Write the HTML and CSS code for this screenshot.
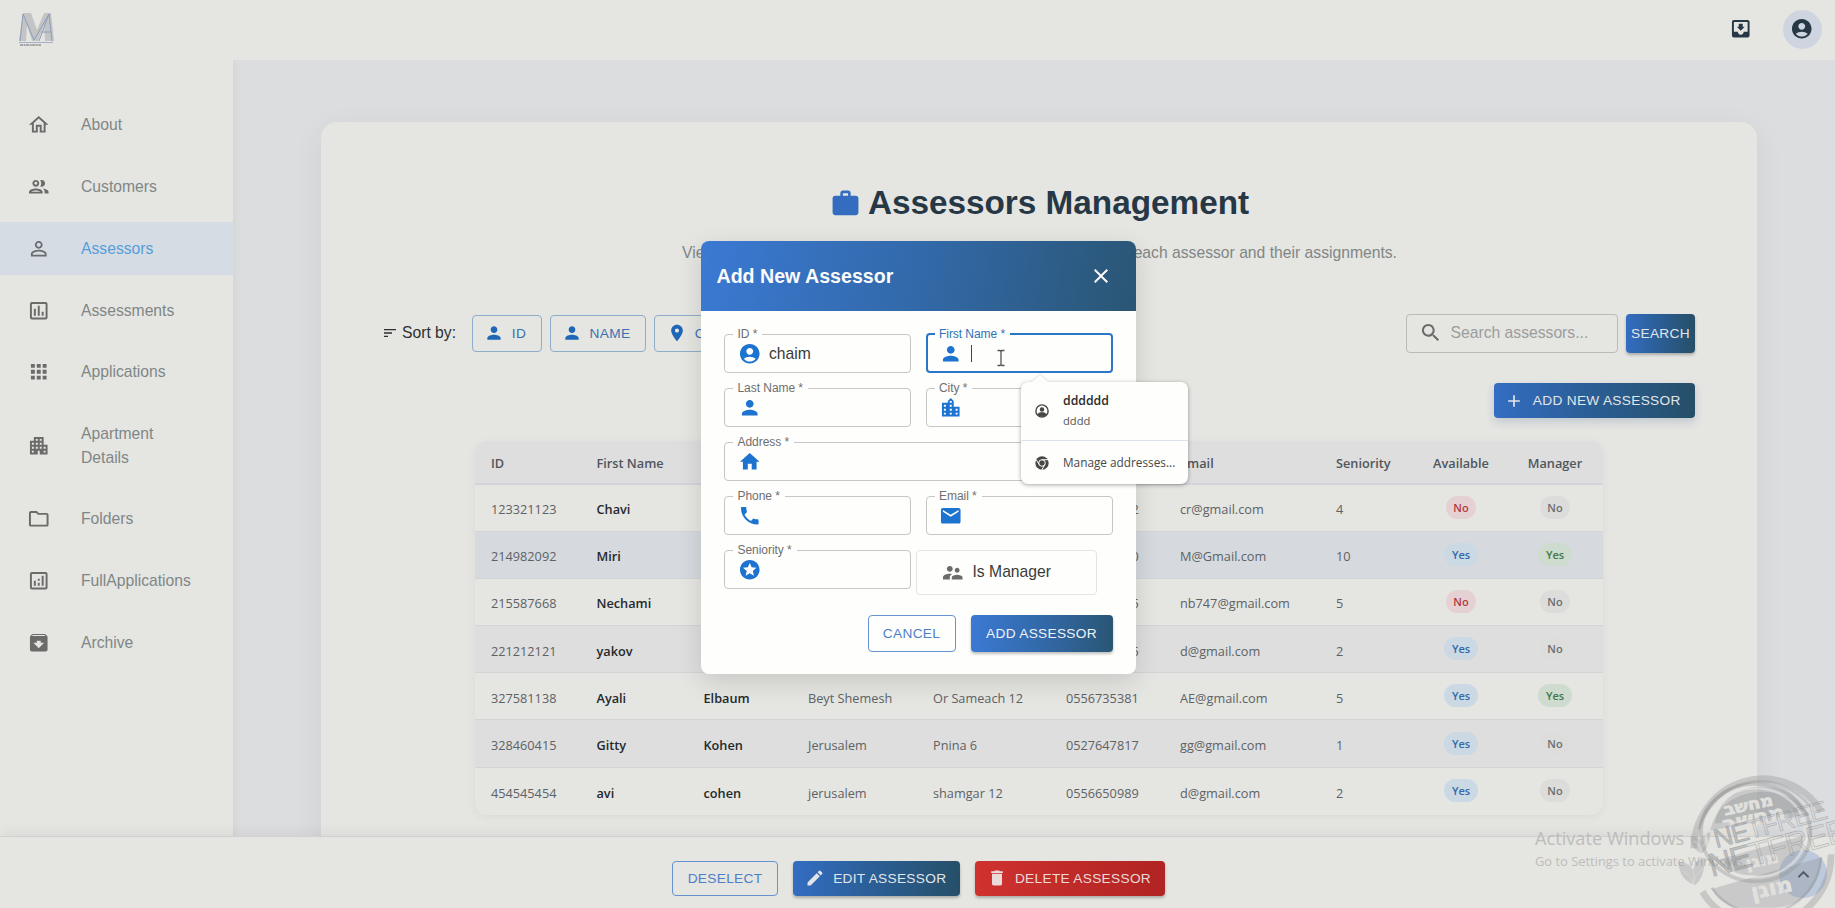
FILE: index.html
```html
<!DOCTYPE html>
<html lang="en">
<head>
<meta charset="utf-8">
<title>Assessors Management</title>
<link rel="stylesheet" href="styles.css">
</head>
<body>
<svg class="sprite" aria-hidden="true">
  <symbol id="i-home-o" viewBox="0 0 24 24"><path d="m12 5.69 5 4.5V18h-2v-6H9v6H7v-7.81zM12 3 2 12h3v8h6v-6h2v6h6v-8h3z"/></symbol>
  <symbol id="i-people" viewBox="0 0 24 24"><path d="M9 13.75c-2.34 0-7 1.17-7 3.5V19h14v-1.75c0-2.33-4.66-3.5-7-3.5M4.34 17c.84-.58 2.87-1.25 4.66-1.25s3.82.67 4.66 1.25zM9 12c1.93 0 3.5-1.57 3.5-3.5S10.93 5 9 5 5.5 6.57 5.5 8.5 7.07 12 9 12m0-5c.83 0 1.5.67 1.5 1.5S9.83 10 9 10s-1.5-.67-1.5-1.5S8.17 7 9 7m7.04 6.81c1.16.84 1.96 1.96 1.96 3.44V19h4v-1.75c0-2.02-3.5-3.17-5.96-3.44M15 12c1.93 0 3.5-1.57 3.5-3.5S16.93 5 15 5c-.54 0-1.04.13-1.5.35.63.89 1 1.98 1 3.15s-.37 2.26-1 3.15c.46.22.96.35 1.5.35"/></symbol>
  <symbol id="i-person-o" viewBox="0 0 24 24"><path d="M12 5.9c1.16 0 2.1.94 2.1 2.1s-.94 2.1-2.1 2.1S9.9 9.16 9.9 8s.94-2.1 2.1-2.1m0 9c2.97 0 6.1 1.46 6.1 2.1v1.1H5.9V17c0-.64 3.13-2.1 6.1-2.1M12 4C9.79 4 8 5.79 8 8s1.79 4 4 4 4-1.79 4-4-1.79-4-4-4m0 9c-2.67 0-8 1.34-8 4v3h16v-3c0-2.66-5.33-4-8-4"/></symbol>
  <symbol id="i-assess" viewBox="0 0 24 24"><path d="M19 3H5c-1.1 0-2 .9-2 2v14c0 1.1.9 2 2 2h14c1.1 0 2-.9 2-2V5c0-1.1-.9-2-2-2m0 16H5V5h14zM7 10h2v7H7zm4-3h2v10h-2zm4 6h2v4h-2z"/></symbol>
  <symbol id="i-apps" viewBox="0 0 24 24"><path d="M4 8h4V4H4zm6 12h4v-4h-4zm-6 0h4v-4H4zm0-6h4v-4H4zm6 0h4v-4h-4zm6-10v4h4V4zm-6 4h4V4h-4zm6 6h4v-4h-4zm0 6h4v-4h-4z"/></symbol>
  <symbol id="i-apartment" viewBox="0 0 24 24"><path d="M17 11V3H7v4H3v14h8v-4h2v4h8V11zM7 19H5v-2h2zm0-4H5v-2h2zm0-4H5V9h2zm4 4H9v-2h2zm0-4H9V9h2zm0-4H9V5h2zm4 8h-2v-2h2zm0-4h-2V9h2zm0-4h-2V5h2zm4 12h-2v-2h2zm0-4h-2v-2h2z"/></symbol>
  <symbol id="i-folder" viewBox="0 0 24 24"><path d="m9.17 6 2 2H20v10H4V6zM10 4H4c-1.1 0-1.99.9-1.99 2L2 18c0 1.1.9 2 2 2h16c1.1 0 2-.9 2-2V8c0-1.1-.9-2-2-2h-8z"/></symbol>
  <symbol id="i-analytics" viewBox="0 0 24 24"><path d="M19 3H5c-1.1 0-2 .9-2 2v14c0 1.1.9 2 2 2h14c1.1 0 2-.9 2-2V5c0-1.1-.9-2-2-2m0 16H5V5h14zM7 12h2v5H7zm8-5h2v10h-2zm-4 7h2v3h-2zm0-4h2v2h-2z"/></symbol>
  <symbol id="i-archive" viewBox="0 0 24 24"><path d="m20.54 5.23-1.39-1.68C18.88 3.21 18.47 3 18 3H6c-.47 0-.88.21-1.16.55L3.46 5.23C3.17 5.57 3 6.02 3 6.5V19c0 1.1.9 2 2 2h14c1.1 0 2-.9 2-2V6.5c0-.48-.17-.93-.46-1.27M12 17.5 6.5 12H10v-2h4v2h3.5zM5.12 5l.81-1h12l.94 1z"/></symbol>
  <symbol id="i-inbox" viewBox="0 0 24 24"><path d="M19 3H4.99c-1.11 0-1.98.9-1.98 2L3 19c0 1.1.88 2 1.99 2H19c1.1 0 2-.9 2-2V5c0-1.1-.9-2-2-2m0 12h-4c0 1.66-1.35 3-3 3s-3-1.34-3-3H4.99V5H19zm-3-5h-2V7h-4v3H8l4 4z"/></symbol>
  <symbol id="i-account" viewBox="0 0 24 24"><path d="M12 2C6.48 2 2 6.48 2 12s4.48 10 10 10 10-4.48 10-10S17.52 2 12 2m0 4c1.93 0 3.5 1.57 3.5 3.5S13.93 13 12 13s-3.5-1.57-3.5-3.5S10.07 6 12 6m0 14c-2.03 0-4.43-.82-6.14-2.88C7.55 15.8 9.68 15 12 15s4.45.8 6.14 2.12C16.43 19.18 14.03 20 12 20"/></symbol>
  <symbol id="i-work" viewBox="0 0 24 24"><path d="M20 6h-4V4c0-1.11-.89-2-2-2h-4c-1.11 0-2 .89-2 2v2H4c-1.11 0-1.99.89-1.99 2L2 19c0 1.11.89 2 2 2h16c1.11 0 2-.89 2-2V8c0-1.11-.89-2-2-2m-6 0h-4V4h4z"/></symbol>
  <symbol id="i-sort" viewBox="0 0 24 24"><path d="M3 18h6v-2H3zM3 6v2h18V6zm0 7h12v-2H3z"/></symbol>
  <symbol id="i-person" viewBox="0 0 24 24"><path d="M12 12c2.21 0 4-1.79 4-4s-1.79-4-4-4-4 1.79-4 4 1.79 4 4 4m0 2c-2.67 0-8 1.34-8 4v2h16v-2c0-2.66-5.33-4-8-4"/></symbol>
  <symbol id="i-pin" viewBox="0 0 24 24"><path d="M12 2C8.13 2 5 5.13 5 9c0 5.25 7 13 7 13s7-7.75 7-13c0-3.87-3.13-7-7-7m0 9.5c-1.38 0-2.5-1.12-2.5-2.5s1.12-2.5 2.5-2.5 2.5 1.12 2.5 2.5-1.12 2.5-2.5 2.5"/></symbol>
  <symbol id="i-search" viewBox="0 0 24 24"><path d="M15.5 14h-.79l-.28-.27C15.41 12.59 16 11.11 16 9.5 16 5.91 13.09 3 9.5 3S3 5.91 3 9.5 5.91 16 9.5 16c1.61 0 3.09-.59 4.23-1.57l.27.28v.79l5 4.99L20.49 19zm-6 0C7.01 14 5 11.99 5 9.5S7.01 5 9.5 5 14 7.01 14 9.5 11.99 14 9.5 14"/></symbol>
  <symbol id="i-add" viewBox="0 0 24 24"><path d="M19 13h-6v6h-2v-6H5v-2h6V5h2v6h6z"/></symbol>
  <symbol id="i-close" viewBox="0 0 24 24"><path d="M19 6.41 17.59 5 12 10.59 6.41 5 5 6.41 10.59 12 5 17.59 6.41 19 12 13.41 17.59 19 19 17.59 13.41 12z"/></symbol>
  <symbol id="i-city" viewBox="0 0 24 24"><path d="M15 11V5l-3-3-3 3v2H3v14h18V11zm-8 8H5v-2h2zm0-4H5v-2h2zm0-4H5V9h2zm6 8h-2v-2h2zm0-4h-2v-2h2zm0-4h-2V9h2zm0-4h-2V5h2zm6 12h-2v-2h2zm0-4h-2v-2h2z"/></symbol>
  <symbol id="i-home" viewBox="0 0 24 24"><path d="M10 20v-6h4v6h5v-8h3L12 3 2 12h3v8z"/></symbol>
  <symbol id="i-phone" viewBox="0 0 24 24"><path d="M6.62 10.79c1.44 2.83 3.76 5.14 6.59 6.59l2.2-2.2c.27-.27.67-.36 1.02-.24 1.12.37 2.33.57 3.57.57.55 0 1 .45 1 1V20c0 .55-.45 1-1 1-9.39 0-17-7.61-17-17 0-.55.45-1 1-1h3.5c.55 0 1 .45 1 1 0 1.25.2 2.45.57 3.57.11.35.03.74-.25 1.02z"/></symbol>
  <symbol id="i-mail" viewBox="0 0 24 24"><path d="M20 4H4c-1.1 0-1.99.9-1.99 2L2 18c0 1.1.9 2 2 2h16c1.1 0 2-.9 2-2V6c0-1.1-.9-2-2-2m0 4-8 5-8-5V6l8 5 8-5z"/></symbol>
  <symbol id="i-stars" viewBox="0 0 24 24"><path d="M11.99 2C6.47 2 2 6.48 2 12s4.47 10 9.99 10C17.52 22 22 17.52 22 12S17.52 2 11.99 2m4.24 16L12 15.45 7.77 18l1.12-4.81-3.73-3.23 4.92-.42L12 5l1.92 4.53 4.92.42-3.73 3.23z"/></symbol>
  <symbol id="i-supervisor" viewBox="0 0 24 24"><path d="M16.5 12c1.38 0 2.49-1.12 2.49-2.5S17.88 7 16.5 7 14 8.12 14 9.5s1.12 2.5 2.5 2.5M9 11c1.66 0 2.99-1.34 2.99-3S10.66 5 9 5 6 6.34 6 8s1.34 3 3 3m7.5 3c-1.83 0-5.5.92-5.5 2.75V19h11v-2.25c0-1.83-3.67-2.75-5.5-2.75M9 13c-2.33 0-7 1.17-7 3.5V19h7v-2.25c0-.85.33-2.34 2.37-3.47C10.5 13.1 9.66 13 9 13"/></symbol>
  <symbol id="i-edit" viewBox="0 0 24 24"><path d="M3 17.25V21h3.75L17.81 9.94l-3.75-3.75zM20.71 7.04c.39-.39.39-1.02 0-1.41l-2.34-2.34a.996.996 0 0 0-1.41 0l-1.83 1.83 3.75 3.75z"/></symbol>
  <symbol id="i-delete" viewBox="0 0 24 24"><path d="M6 19c0 1.1.9 2 2 2h8c1.1 0 2-.9 2-2V7H6zM19 4h-3.5l-1-1h-5l-1 1H5v2h14z"/></symbol>
  <symbol id="i-up" viewBox="0 0 24 24"><path d="M7.41 15.41 12 10.83l4.59 4.58L18 14l-6-6-6 6z"/></symbol>
</svg>

<header class="topbar">
  <svg class="logo" viewBox="0 0 36 36">
    <path d="M4 2h8l6 17 7-17h7l3 28h-9l-1-16-6 16h-6L8 14 7 30H0z" fill="#c3c5c5"/>
    <path d="M1 30 4 3l11 26L30 3l3 27M20 30 30 3M22 21h10" fill="none" stroke="#8d9dbb" stroke-width="1"/>
    <path d="M0 31.500h34" stroke="#a3b0c8" stroke-width="1"/>
    <path d="M1 34h21" stroke="#8f9292" stroke-width="1.400" stroke-dasharray="3 .6 2 .5"/>
  </svg>
  <div class="topbar-actions">
    <svg class="icon"><use href="#i-inbox"/></svg>
    <span class="avatar"><svg class="icon"><use href="#i-account"/></svg></span>
  </div>
</header>

<div class="layout">
  <nav class="sidebar">
    <a class="nav-item"><svg class="icon"><use href="#i-home-o"/></svg><span>About</span></a>
    <a class="nav-item"><svg class="icon"><use href="#i-people"/></svg><span>Customers</span></a>
    <a class="nav-item active"><svg class="icon"><use href="#i-person-o"/></svg><span>Assessors</span></a>
    <a class="nav-item"><svg class="icon"><use href="#i-assess"/></svg><span>Assessments</span></a>
    <a class="nav-item"><svg class="icon"><use href="#i-apps"/></svg><span>Applications</span></a>
    <a class="nav-item tall"><svg class="icon"><use href="#i-apartment"/></svg><span>Apartment Details</span></a>
    <a class="nav-item"><svg class="icon"><use href="#i-folder"/></svg><span>Folders</span></a>
    <a class="nav-item"><svg class="icon"><use href="#i-analytics"/></svg><span>FullApplications</span></a>
    <a class="nav-item"><svg class="icon"><use href="#i-archive"/></svg><span>Archive</span></a>
  </nav>

  <main class="content">
    <section class="card">
      <h1 class="title"><svg class="title-icon"><use href="#i-work"/></svg><span>Assessors Management</span></h1>
      <p class="subtitle"><span>View and manage all assessors in the system.</span><span>Details of each assessor and their assignments.</span></p>

      <div class="toolbar">
        <div class="sort">
          <svg class="sort-icon"><use href="#i-sort"/></svg>
          <span class="sort-label">Sort by:</span>
          <button class="btn sort-btn sort-id"><svg><use href="#i-person"/></svg>ID</button>
          <button class="btn sort-btn sort-name"><svg><use href="#i-person"/></svg>NAME</button>
          <button class="btn sort-btn sort-city"><svg><use href="#i-pin"/></svg>CITY</button>
        </div>
        <div class="search">
          <div class="search-box"><svg class="icon"><use href="#i-search"/></svg><span>Search assessors...</span></div>
          <button class="btn primary search-btn">SEARCH</button>
        </div>
      </div>
      <div class="add-row">
        <button class="btn primary add-btn"><svg><use href="#i-add"/></svg>ADD NEW ASSESSOR</button>
      </div>

      <table class="grid">
        <colgroup><col class="c1"><col class="c2"><col class="c3"><col class="c4"><col class="c5"><col class="c6"><col class="c7"><col class="c8"><col class="c9"><col class="c10"></colgroup>
        <thead><tr><th>ID</th><th>First Name</th><th>Last Name</th><th>City</th><th>Address</th><th>Phone</th><th>Email</th><th>Seniority</th><th class="mid">Available</th><th class="mid">Manager</th></tr></thead>
        <tbody>
          <tr><td>123321123</td><td class="b">Chavi</td><td class="b">Rozen</td><td>Jerusalem</td><td>Sorotzkin 8</td><td>0527184432</td><td>cr@gmail.com</td><td>4</td><td class="mid"><span class="chip red">No</span></td><td class="mid"><span class="chip">No</span></td></tr>
          <tr class="selected"><td>214982092</td><td class="b">Miri</td><td class="b">Levi</td><td>Jerusalem</td><td>Minchat 4</td><td>0533124510</td><td>M@Gmail.com</td><td>10</td><td class="mid"><span class="chip blue">Yes</span></td><td class="mid"><span class="chip green">Yes</span></td></tr>
          <tr><td>215587668</td><td class="b">Nechami</td><td class="b">Braun</td><td>Jerusalem</td><td>Ezra 7</td><td>0548471335</td><td>nb747@gmail.com</td><td>5</td><td class="mid"><span class="chip red">No</span></td><td class="mid"><span class="chip">No</span></td></tr>
          <tr class="even"><td>221212121</td><td class="b">yakov</td><td class="b">cohen</td><td>jerusalem</td><td>Yafo 12</td><td>0556712345</td><td>d@gmail.com</td><td>2</td><td class="mid"><span class="chip blue">Yes</span></td><td class="mid"><span class="chip">No</span></td></tr>
          <tr><td>327581138</td><td class="b">Ayali</td><td class="b">Elbaum</td><td>Beyt Shemesh</td><td>Or Sameach 12</td><td>0556735381</td><td>AE@gmail.com</td><td>5</td><td class="mid"><span class="chip blue">Yes</span></td><td class="mid"><span class="chip green">Yes</span></td></tr>
          <tr class="even"><td>328460415</td><td class="b">Gitty</td><td class="b">Kohen</td><td>Jerusalem</td><td>Pnina 6</td><td>0527647817</td><td>gg@gmail.com</td><td>1</td><td class="mid"><span class="chip blue">Yes</span></td><td class="mid"><span class="chip">No</span></td></tr>
          <tr><td>454545454</td><td class="b">avi</td><td class="b">cohen</td><td>jerusalem</td><td>shamgar 12</td><td>0556650989</td><td>d@gmail.com</td><td>2</td><td class="mid"><span class="chip blue">Yes</span></td><td class="mid"><span class="chip">No</span></td></tr>
        </tbody>
      </table>
    </section>
  </main>
</div>

<footer class="actionbar">
  <button class="btn outline deselect">DESELECT</button>
  <button class="btn primary edit"><svg><use href="#i-edit"/></svg>EDIT ASSESSOR</button>
  <button class="btn danger delete"><svg><use href="#i-delete"/></svg>DELETE ASSESSOR</button>
</footer>

<span class="to-top"><svg><use href="#i-up"/></svg></span>

<div class="activate"><div class="activate-title">Activate Windows</div><div class="activate-text">Go to Settings to activate Windows.</div></div>

<svg class="stamp" viewBox="0 0 510 429">
  <g fill="none" stroke="#8c8f91" stroke-opacity=".34">
    <path d="M86 250A208 214 0 0 1 468 138" stroke-width="20"/>
    <path d="M102 192A184 172 0 0 1 436 126" stroke-width="9"/>
    <path d="M112 380A208 208 0 0 0 498 268" stroke-width="20"/>
    <path d="M140 368A180 180 0 0 0 468 278" stroke-width="7"/>
    <ellipse cx="272" cy="203" rx="164" ry="146" stroke-width="11"/>
  </g>
  <g fill="#8c8f91" fill-opacity=".32">
    <path d="M150 176C165 40 375 30 418 138z"/>
    <path d="M136 196C165 50 380 50 432 150z"/>
    <path d="M160 284 414 212C424 290 350 330 285 332 225 334 180 320 160 284z"/>
    <path d="M140 372 472 276C462 380 400 425 330 428H215C180 420 155 400 140 372z"/>
    <path d="M40 292q34-2 44 24 4-34 36-38-2 62-30 82-46-14-50-68z"/>
    <path d="M76 212q24 0 32 18 4-26 28-28-2 46-24 62-34-8-36-52z"/>
  </g>
  <g fill="none" stroke="#e5e5e2" stroke-opacity=".65" stroke-width="2">
    <path d="M50 318q24 8 36 38q-2-24 30-46M86 356V316M84 228q18 6 24 30q2-18 24-34"/>
    <ellipse cx="272" cy="203" rx="150" ry="133" stroke-width="7"/>
  </g>
  <g class="stamp-he">
    <text x="250" y="136" transform="rotate(-12 250 120)" font-size="48" textLength="150" lengthAdjust="spacingAndGlyphs">מחשב</text>
    <text x="266" y="180" transform="rotate(-12 266 160)" font-size="60" textLength="190" lengthAdjust="spacingAndGlyphs">מחשב</text>
    <text x="292" y="302" transform="rotate(-12 292 290)" font-size="48" textLength="100" lengthAdjust="spacingAndGlyphs">מוגן</text>
    <text x="322" y="390" transform="rotate(-12 322 380)" font-size="62" textLength="126" lengthAdjust="spacingAndGlyphs">מוגן</text>
  </g>
  <g class="stamp-nf">
    <text transform="translate(154 250) rotate(-15)" font-size="80" textLength="350"><tspan class="heavy">NE</tspan>TFREE</text>
    <text transform="translate(140 336) rotate(-15)" font-size="98" textLength="430"><tspan class="heavy">NE</tspan>TFREE</text>
  </g>
</svg>

<div class="dialog">
  <div class="dialog-head"><h2>Add New Assessor</h2><svg><use href="#i-close"/></svg></div>
  <div class="dialog-body">
    <div class="form">
      <fieldset class="field"><legend>ID *</legend><svg><use href="#i-account"/></svg><span>chaim</span></fieldset>
      <fieldset class="field focus"><legend>First Name *</legend><svg><use href="#i-person"/></svg><i class="caret"></i></fieldset>
      <fieldset class="field"><legend>Last Name *</legend><svg><use href="#i-person"/></svg></fieldset>
      <fieldset class="field"><legend>City *</legend><svg><use href="#i-city"/></svg></fieldset>
      <fieldset class="field wide"><legend>Address *</legend><svg><use href="#i-home"/></svg></fieldset>
      <fieldset class="field"><legend>Phone *</legend><svg><use href="#i-phone"/></svg></fieldset>
      <fieldset class="field"><legend>Email *</legend><svg><use href="#i-mail"/></svg></fieldset>
      <fieldset class="field"><legend>Seniority *</legend><svg><use href="#i-stars"/></svg></fieldset>
      <div class="manager"><svg><use href="#i-supervisor"/></svg><span>Is Manager</span></div>
    </div>
    <div class="dialog-actions">
      <button class="btn outline cancel">CANCEL</button>
      <button class="btn primary submit">ADD ASSESSOR</button>
    </div>
  </div>
</div>

<div class="autofill">
  <div class="autofill-item">
    <svg viewBox="0 0 24 24"><circle cx="12" cy="12" r="10.500" fill="none" stroke="#474747" stroke-width="2.400"/><circle cx="12" cy="9.500" r="3.800"/><path d="M4.500 17.500C6 14.800 9 14.200 12 14.200s6 .6 7.500 3.300C18 20.500 15 22 12 22s-6-1.500-7.500-4.500z"/></svg>
    <div><b>dddddd</b><small>dddd</small></div>
  </div>
  <div class="autofill-manage">
    <svg viewBox="0 0 24 24"><circle cx="12" cy="12" r="11.500"/><circle cx="12" cy="12" r="5.600" fill="none" stroke="#fefefe" stroke-width="1.700"/><path d="M12 6.400H22.500M7.200 14.800 2 6M16.800 14.800 11.500 24" stroke="#fefefe" stroke-width="1.700" fill="none"/></svg>
    <span>Manage addresses...</span>
  </div>
</div>

<svg class="ibeam" viewBox="0 0 8 17"><path d="M.5 1h2.500L4 2l1-1h2.500M4 2v13M.5 16h2.500L4 15l1 1h2.500" fill="none" stroke="#555" stroke-width="1.300"/></svg>
</body>
</html>
```

FILE: styles.css
```css
* { box-sizing: border-box; }
body {
  margin: 0; width: 1835px; height: 908px; overflow: hidden; position: relative;
  background: #dcdddf; font-family: "Liberation Sans", Arial, sans-serif; font-size: 15.7px; color: #263845;
}
svg { fill: currentColor; flex: none; }
.sprite { position: absolute; width: 0; height: 0; }
.icon { width: 23.5px; height: 23.5px; }

.topbar {
  height: 60px; background: #e5e5e2; display: flex; align-items: center; justify-content: space-between;
  padding: 0 13.500px 2px 19px; position: relative;
}
.logo { width: 36px; height: 36px; }
.topbar-actions { display: flex; align-items: center; gap: 30.500px; color: #263845; }
.avatar { width: 39px; height: 39px; border-radius: 50%; background: #cfd5e0; display: grid; place-items: center; }

.layout { display: flex; height: 848px; overflow: hidden; }
.sidebar {
  width: 233.300px; background: #e5e5e2; padding-top: 38px; display: flex; flex-direction: column; gap: 7.900px;
  box-shadow: 2px 0 8px rgba(0,0,0,.04); flex: none;
}
.nav-item { height: 53.900px; display: flex; align-items: center; padding-left: 26.500px; gap: 31px; color: #7f8786; line-height: 23.500px; }
.nav-item svg { color: #6b6b6a; }
.nav-item span { width: 110px; }
.nav-item.tall { height: 77.400px; }
.nav-item.active { background: #d5dce3; color: #569edb; }
.nav-item.active svg { color: #696d70; }

.content { flex: 1; padding: 62px 78px 0 87.700px; min-width: 0; }
.card {
  height: 786px; background: #e5e5e2; border-radius: 16px 16px 0 0; padding: 60px 62px 0 63px;
  box-shadow: 0 8px 30px rgba(40,50,70,.07);
}
.title { margin: 0; height: 42px; display: flex; justify-content: center; align-items: center; gap: 7px; font-size: 33.300px; line-height: 42px; color: #263845; }
.title span { white-space: nowrap; }
.title-icon { width: 31px; height: 31px; color: #346cbf; margin-top: 1px; }
.subtitle { margin: 17px auto 0; width: 715px; height: 24px; line-height: 24px; display: flex; justify-content: space-between; color: #818585; white-space: nowrap; }

.toolbar { margin-top: 48px; height: 40px; display: flex; justify-content: space-between; align-items: center; }
.sort { display: flex; align-items: center; color: #2c2f31; }
.sort-icon { width: 16px; height: 16px; margin: 0 3.500px 0 -1.500px; }
.sort-label { width: 70px; }
.btn {
  font: 13.700px "Liberation Sans", Arial, sans-serif; letter-spacing: .3px; border: 0; border-radius: 4px; padding: 0;
  display: flex; align-items: center; justify-content: center; gap: 8px; height: 36px; white-space: nowrap;
}
.btn svg { width: 20px; height: 20px; }
.primary { color: #e2e6ea; background: linear-gradient(90deg, #346dc2, #2b5f98 45%, #264f68); box-shadow: 0 2px 3px rgba(0,0,0,.25); }
.outline { color: #4d7fc9; background: transparent; border: 1px solid #6593d2; }
.sort-btn { background: transparent; border: 1px solid #8faccb; color: #3a70ad; height: 37px; gap: 7.500px; margin-right: 8px; padding-right: 3.500px; }
.sort-btn svg { color: #1e67b6; }
.sort-id { width: 70px; }
.sort-name { width: 96px; }
.sort-city { width: 90px; }
.search { display: flex; gap: 8px; }
.search-box { width: 212px; height: 39px; border: 1px solid #b9bab9; border-radius: 4px; display: flex; align-items: center; padding-left: 12px; gap: 8px; color: #9b9d9c; }
.search-box svg { color: #6b6b6a; }
.search-btn { width: 69px; height: 39px; }
.add-row { display: flex; justify-content: flex-end; margin-top: 30px; }
.add-btn { width: 201.500px; height: 35px; gap: 8.500px; padding-right: 3.500px; box-shadow: 0 4px 9px rgba(50,90,130,.2); }

.grid {
  width: 1127.500px; margin: 23px auto 0 91.500px; table-layout: fixed; border-spacing: 0;
  font: 12.720px "Open Sans", "Noto Sans", sans-serif; color: #5d6265; border-radius: 12px; overflow: hidden;
  box-shadow: 0 2px 10px rgba(0,0,0,.05);
}
.c1 { width: 105.500px; } .c2 { width: 107px; } .c3 { width: 104.500px; } .c4 { width: 125px; } .c5 { width: 133px; }
.c6 { width: 114px; } .c7 { width: 156px; } .c8 { width: 94.500px; } .c9 { width: 92px; } .c10 { width: 96px; }
.grid th { height: 43.500px; padding: 2px 0 0 15.500px; text-align: left; font-weight: 600; color: #50565b; background: #dedede; border-bottom: 2px solid #d3d5d8; }
.grid td { height: 47.200px; padding: 3px 0 0 15.500px; border-bottom: 1px solid #d2d4d6; }
.grid tbody tr:last-child td { border-bottom: 0; }
.grid th.mid { text-align: center; padding: 2px 0 0; }
.grid td.mid { text-align: center; padding: 2px 0 0; }
.grid .b { font-weight: 600; color: #24292c; }
.even { background: #dedede; }
.selected { background: #d6dade; }
.chip { display: inline-block; min-width: 29px; height: 23px; line-height: 23px; padding: 0 7.500px; border-radius: 12px; font-size: 11px; font-weight: 600; background: #dcdcdb; color: #6b6e70; vertical-align: middle; margin-bottom: 3px; }
.even .chip { background: #dddddc; }
.chip.red { background: #e5d1d3; color: #b23a40; }
.chip.blue, .even .chip.blue { background: #cbd9e4; color: #3469ab; }
.chip.green { background: #cddccf; color: #44774b; }

.actionbar {
  position: absolute; left: 0; bottom: 0; width: 100%; height: 72px; background: #e5e5e2; border-top: 1px solid #cfd0cf;
  box-shadow: 0 -4px 12px rgba(0,0,0,.05); display: flex; justify-content: center; align-items: center; gap: 15px; padding: 12px 0 1px 2px;
}
.actionbar .btn { height: 35px; }
.deselect { width: 105.500px; }
.edit { width: 167.500px; gap: 8.500px; padding-right: 2px; }
.delete { width: 189.500px; padding-right: 2px; }
.danger { color: #eadad9; background: linear-gradient(90deg, #cf322f, #b02423); box-shadow: 0 2px 3px rgba(0,0,0,.25); }

.to-top { position: absolute; left: 1779px; top: 850px; width: 48px; height: 48px; border-radius: 50%; background: #bdc9dc; display: grid; place-items: center; color: #333f4b; }
.to-top svg { width: 23px; height: 23px; }
.activate { position: absolute; left: 1535px; top: 825px; font-family: "Open Sans", "Noto Sans", sans-serif; color: #bdbdbb; white-space: nowrap; }
.activate-title { font-size: 18.200px; line-height: 27px; }
.activate-text { font-size: 12.900px; line-height: 18px; }
.stamp { position: absolute; left: 1665px; top: 765px; width: 170px; height: 143px; overflow: hidden; }
.stamp text { font-family: "DejaVu Sans", "Liberation Sans", sans-serif; }
.stamp-he { fill: #e0e0de; stroke: #e0e0de; stroke-width: 2px; font-weight: bold; text-anchor: middle; }
.stamp .stamp-nf text { font-family: "Liberation Sans", sans-serif; fill: #8c8f91; fill-opacity: .08; stroke: #808487; stroke-opacity: .45; stroke-width: 2px; }
.stamp-nf .heavy { fill-opacity: .45; }

.dialog { position: absolute; left: 701px; top: 241px; width: 434.500px; height: 433px; background: #fefefd; border-radius: 8px; overflow: hidden; box-shadow: 0 8px 26px rgba(0,0,0,.13); }
.dialog-head { height: 70px; background: linear-gradient(100deg, #3b79d3, #3269a9 50%, #2a5674); display: flex; align-items: center; justify-content: space-between; padding: 0 22.500px 0 15.500px; color: #fcfcfc; }
.dialog-head h2 { margin: 0; font-size: 19.600px; }
.dialog-head svg { width: 24px; height: 24px; }
.dialog-body { padding: 17px 23px; }
.form { display: grid; grid-template-columns: 187px 187px; column-gap: 14.500px; grid-auto-rows: 54.100px; }
.field { min-width: 0; margin: 0; height: 44.500px; border: 1px solid #c6c6c6; border-radius: 4px; padding: 0 0 0 12.500px; display: flex; align-items: center; gap: 8px; color: #3a3a3a; }
.field legend { font-size: 12px; line-height: 12px; padding: 0 5px 0 4.500px; margin-left: -4.500px; color: #6f6f6f; letter-spacing: -.05px; }
.field svg { width: 23.500px; height: 23.500px; color: #1c73d0; margin-bottom: 4px; }
.field > span { margin-bottom: 3px; }
.field.wide { grid-column: span 2; }
.field.focus { border: 2px solid #2a76c8; padding-left: 11.500px; }
.field.focus legend { color: #2f72b8; }
.caret { width: 1px; height: 17px; background: #444; margin-bottom: 3px; }
.manager { width: 181px; height: 45px; margin: 5.500px 0 0 -10px; border: 1px solid #e4e4e4; border-radius: 4px; display: flex; align-items: center; padding-left: 24px; gap: 8.500px; color: #3a3a3a; }
.manager svg { width: 23.500px; height: 23.500px; color: #6b6b6b; }
.dialog-actions { display: flex; justify-content: flex-end; gap: 15px; margin: 17px 0 0; }
.dialog-actions .btn { height: 36.500px; padding-bottom: 1px; }
.cancel { width: 88px; }
.submit { width: 142px; color: #f0f3f7; background: linear-gradient(90deg, #3b79d3, #3269a9 50%, #2a5674); }

.autofill { position: absolute; left: 1021px; top: 382px; width: 167px; height: 101.500px; background: #fefefd; border-radius: 7px; box-shadow: 0 1px 4px rgba(0,0,0,.35); font-family: "Open Sans", "Noto Sans", sans-serif; color: #474747; }
.autofill::before { content: ""; position: absolute; left: 11px; top: -7px; border: 8px solid transparent; border-top: 0; border-bottom: 7px solid #fefefd; filter: drop-shadow(0 -1px 1px rgba(0,0,0,.12)); }
.autofill-item { height: 59px; border-bottom: 1px solid #dbe2ee; display: flex; align-items: center; padding-left: 14px; gap: 14px; }
.autofill svg { width: 14px; height: 14px; }
.autofill b, .autofill small { display: block; font-size: 12.300px; line-height: 20px; font-weight: 600; color: #2b2b2b; }
.autofill small { font-size: 11.200px; font-weight: 400; color: #555; }
.autofill-manage { height: 42px; display: flex; align-items: center; padding: 1px 0 0 14px; gap: 14px; font-size: 11.800px; white-space: nowrap; }
.autofill-manage span { margin-top: -1px; }
.ibeam { position: absolute; left: 997px; top: 349px; width: 8px; height: 18px; }
```
